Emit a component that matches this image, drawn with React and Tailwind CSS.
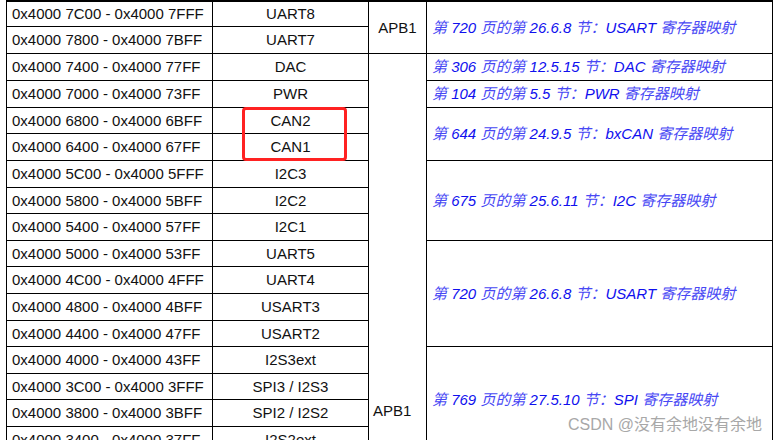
const rows = [
  ['0x4000 7C00 - 0x4000 7FFF', 'UART8', 'row-start-1'],
  ['0x4000 7800 - 0x4000 7BFF', 'UART7', 'row-start-2'],
  ['0x4000 7400 - 0x4000 77FF', 'DAC', 'row-start-3'],
  ['0x4000 7000 - 0x4000 73FF', 'PWR', 'row-start-4'],
  ['0x4000 6800 - 0x4000 6BFF', 'CAN2', 'row-start-5'],
  ['0x4000 6400 - 0x4000 67FF', 'CAN1', 'row-start-6'],
  ['0x4000 5C00 - 0x4000 5FFF', 'I2C3', 'row-start-7'],
  ['0x4000 5800 - 0x4000 5BFF', 'I2C2', 'row-start-8'],
  ['0x4000 5400 - 0x4000 57FF', 'I2C1', 'row-start-9'],
  ['0x4000 5000 - 0x4000 53FF', 'UART5', 'row-start-10'],
  ['0x4000 4C00 - 0x4000 4FFF', 'UART4', 'row-start-11'],
  ['0x4000 4800 - 0x4000 4BFF', 'USART3', 'row-start-12'],
  ['0x4000 4400 - 0x4000 47FF', 'USART2', 'row-start-13'],
  ['0x4000 4000 - 0x4000 43FF', 'I2S3ext', 'row-start-14'],
  ['0x4000 3C00 - 0x4000 3FFF', 'SPI3 / I2S3', 'row-start-15'],
  ['0x4000 3800 - 0x4000 3BFF', 'SPI2 / I2S2', 'row-start-16'],
  ['0x4000 3400 - 0x4000 37FF', 'I2S2ext', 'row-start-17'],
];

// register map references, one per merged cell
const refs = [
  { place: 'row-start-1 row-span-2', page: '720', sec: '26.6.8', name: 'USART' },
  { place: 'row-start-3 row-span-1', page: '306', sec: '12.5.15', name: 'DAC' },
  { place: 'row-start-4 row-span-1', page: '104', sec: '5.5', name: 'PWR' },
  { place: 'row-start-5 row-span-2', page: '644', sec: '24.9.5', name: 'bxCAN' },
  { place: 'row-start-7 row-span-3', page: '675', sec: '25.6.11', name: 'I2C' },
  { place: 'row-start-10 row-span-4', page: '720', sec: '26.6.8', name: 'USART' },
  { place: 'row-start-14 row-span-4', page: '769', sec: '27.5.10', name: 'SPI' },
];

const Cjk = ({ children }) => <span className="text-[#4848f4]">{children}</span>;

const Ref = ({ page, sec, name }) => (
  <span className="italic text-[#1010ee] whitespace-nowrap">
    <Cjk>第</Cjk> {page} <Cjk>页的第</Cjk> {sec} <Cjk>节：</Cjk>{name} <Cjk>寄存器映射</Cjk>
  </span>
);

export default function App() {
  return (
    <div className="relative w-[780px] h-[440px] overflow-hidden bg-white font-['Liberation_Sans','Noto_Sans_CJK_SC',sans-serif] text-[15px] leading-[18px] text-[#111]">
      <div className="ml-[6px] w-[767px] grid grid-cols-[205px_155px_57px_345px] grid-rows-[24px_26px_26px_26px_25px_26px_26px_25px_26px_25px_26px_26px_25px_26px_25px_26px_26px] gap-px bg-black pt-[2px] px-px pb-px">
        {rows.map(([addr, name, row]) => (
          <div key={addr} className={`${row} col-start-1 bg-white flex items-center pl-[5px] whitespace-nowrap`}>
            {addr}
          </div>
        ))}
        {rows.map(([addr, name, row]) => (
          <div key={name} className={`${row} col-start-2 bg-white flex items-center justify-center whitespace-nowrap`}>
            {name}
          </div>
        ))}
        <div className="row-start-1 row-span-2 col-start-3 bg-white flex items-center justify-center">APB1</div>
        <div className="row-start-3 row-span-15 col-start-3 bg-white flex flex-col justify-end pl-[4px] pb-[33px]">APB1</div>
        {refs.map((r) => (
          <div key={r.place} className={`${r.place} col-start-4 bg-white flex items-center pl-[5px]`}>
            <Ref {...r} />
          </div>
        ))}
      </div>

      <div className="absolute left-[242px] top-[107px] w-[105px] h-[54px] border-[3px] border-[#f22] rounded-[4px]" />

      <div className="absolute left-[568px] top-[415px] text-[16px] leading-[20px] text-[#a8a8a8] whitespace-nowrap">
        CSDN @没有余地没有余地
      </div>
    </div>
  );
}
